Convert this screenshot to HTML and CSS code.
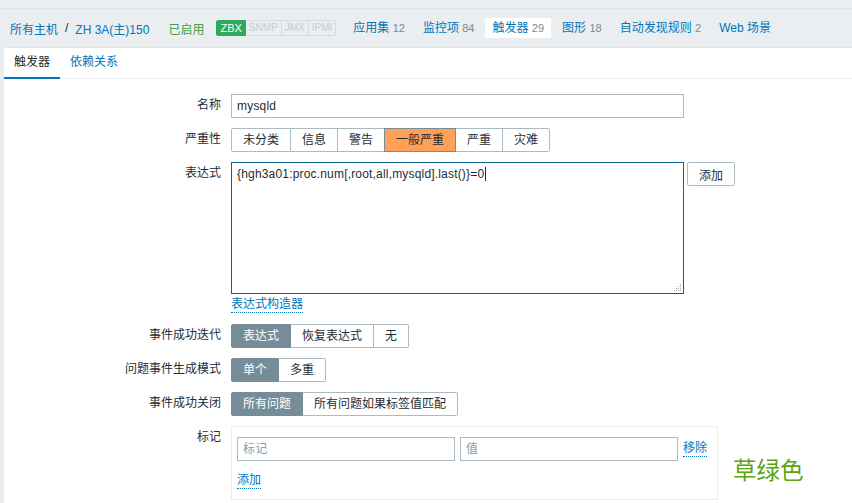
FILE: index.html
```html
<!DOCTYPE html>
<html lang="zh-CN">
<head>
    <meta charset="UTF-8">
    <title>触发器</title>
    <link rel="stylesheet" href="styles.css">
</head>
<body>
    <div class="host-nav">
        <a class="crumb" href="#">所有主机</a>
        <span class="crumb-sep">/</span>
        <a class="crumb host-name" href="#">ZH 3A(主)150</a>
        <span class="host-status">已启用</span>
        <div class="badges">
            <span class="badge badge-on">ZBX</span>
            <span class="badge">SNMP</span>
            <span class="badge">JMX</span>
            <span class="badge badge-last">IPMI</span>
        </div>
        <div class="nav-items">
            <a class="nav-item" href="#">应用集 <span class="count">12</span></a>
            <a class="nav-item" href="#">监控项 <span class="count">84</span></a>
            <a class="nav-item active" href="#">触发器 <span class="count">29</span></a>
            <a class="nav-item" href="#">图形 <span class="count">18</span></a>
            <a class="nav-item" href="#">自动发现规则 <span class="count">2</span></a>
            <a class="nav-item" href="#">Web 场景</a>
        </div>
    </div>

    <div class="panel">
        <div class="tabs">
            <a class="tab tab-active" href="#">触发器</a>
            <a class="tab" href="#">依赖关系</a>
        </div>

        <form class="form">
            <label class="form-label">名称</label>
            <div><input class="text-input name-input" type="text" value="mysqld"></div>

            <label class="form-label">严重性</label>
            <div class="segments">
                <span class="segment">未分类</span>
                <span class="segment">信息</span>
                <span class="segment">警告</span>
                <span class="segment severity-average">一般严重</span>
                <span class="segment">严重</span>
                <span class="segment">灾难</span>
            </div>

            <label class="form-label">表达式</label>
            <div>
                <div class="expression-row">
                    <div class="expression">{hgh3a01:proc.num[,root,all,mysqld].last()}=0<span class="caret"></span>
                        <svg class="grip" width="9" height="9" viewBox="0 0 9 9">
                            <g fill="#9aa7ae">
                                <rect x="7" y="1" width="1" height="1"/>
                                <rect x="5" y="3" width="1" height="1"/>
                                <rect x="7" y="3" width="1" height="1"/>
                                <rect x="3" y="5" width="1" height="1"/>
                                <rect x="5" y="5" width="1" height="1"/>
                                <rect x="7" y="5" width="1" height="1"/>
                                <rect x="1" y="7" width="1" height="1"/>
                                <rect x="3" y="7" width="1" height="1"/>
                                <rect x="5" y="7" width="1" height="1"/>
                                <rect x="7" y="7" width="1" height="1"/>
                            </g>
                        </svg>
                    </div>
                    <button class="btn-add" type="button">添加</button>
                </div>
                <a class="dotted-link builder-link" href="#">表达式构造器</a>
            </div>

            <label class="form-label">事件成功迭代</label>
            <div class="segments">
                <span class="segment selected">表达式</span>
                <span class="segment">恢复表达式</span>
                <span class="segment">无</span>
            </div>

            <label class="form-label">问题事件生成模式</label>
            <div class="segments">
                <span class="segment selected">单个</span>
                <span class="segment">多重</span>
            </div>

            <label class="form-label">事件成功关闭</label>
            <div class="segments">
                <span class="segment selected">所有问题</span>
                <span class="segment">所有问题如果标签值匹配</span>
            </div>

            <label class="form-label">标记</label>
            <div class="tags-row">
                <div class="tags-box">
                    <div class="tag-line">
                        <input class="text-input tag-input" type="text" placeholder="标记">
                        <input class="text-input tag-input" type="text" placeholder="值">
                        <a class="dotted-link" href="#">移除</a>
                    </div>
                    <a class="dotted-link" href="#">添加</a>
                </div>
                <span class="note">草绿色</span>
            </div>
        </form>
    </div>
</body>
</html>
```

FILE: styles.css
```css
* {
    box-sizing: border-box;
}
html, body {
    height: 503px;
    overflow: hidden;
}
body {
    margin: 0;
    padding-top: 8px;
    background-color: #ebeef0;
    color: #1f2c33;
    font-family: "Liberation Sans", Arial, "Noto Sans CJK SC", sans-serif;
    font-size: 12px;
}
a {
    color: #0275b8;
    text-decoration: none;
}
.host-nav {
    display: flex;
    align-items: center;
    height: 39px;
    padding-left: 10px;
    border-top: 1px solid #dfe4e7;
}
.crumb-sep {
    margin: 0 7px;
    color: #1f2c33;
}
.host-status {
    margin-left: 19px;
    color: #429e47;
}
.badges {
    display: flex;
    margin-left: 12px;
}
.badge {
    height: 16px;
    padding: 0 3px;
    border: 1px solid #d5dbde;
    border-left: 0;
    color: #c5cdd2;
    font-size: 10px;
    line-height: 14px;
}
.badge-on {
    padding: 0 3px;
    border: 1px solid #2bab5b;
    border-radius: 2px 0 0 2px;
    background-color: #2bab5b;
    color: white;
    font-size: 11px;
}
.badge-last {
    border-radius: 0 2px 2px 0;
}
.nav-items {
    display: flex;
    align-items: center;
    margin-left: 10px;
}
.nav-item {
    height: 20px;
    margin-right: 4px;
    padding: 0 7px;
    line-height: 20px;
    white-space: nowrap;
}
.nav-item.active {
    border-radius: 2px;
    background-color: white;
}
.count {
    color: #768d99;
    font-size: 11px;
}
.panel {
    height: 460px;
    margin-left: 4px;
    background-color: white;
    border-top: 1px solid #dfe4e7;
}
.tabs {
    display: flex;
    height: 31px;
    border-bottom: 1px solid #ebeef0;
}
.tab {
    height: 31px;
    padding: 0 10px;
    line-height: 29px;
}
.tab-active {
    border-bottom: 2px solid #0275b8;
    color: #1f2c33;
}
.form {
    display: grid;
    grid-template-columns: 217px 1fr;
    column-gap: 10px;
    row-gap: 10px;
    padding-top: 15px;
}
.form-label {
    line-height: 23px;
    text-align: right;
    white-space: nowrap;
}
.text-input {
    height: 24px;
    padding: 0 5px;
    border: 1px solid #acbbc2;
    color: #1f2c33;
    font: inherit;
    letter-spacing: 0.2px;
    outline: none;
}
.text-input::placeholder {
    color: #8a9aa3;
}
.name-input {
    display: block;
    width: 453px;
}
.segments {
    display: flex;
    height: 24px;
}
.segment {
    padding: 0 11px;
    border: 1px solid #acbbc2;
    border-left: 0;
    line-height: 22px;
    white-space: nowrap;
}
.segment:first-child {
    border-left: 1px solid #acbbc2;
    border-radius: 2px 0 0 2px;
}
.segment:last-child {
    border-radius: 0 2px 2px 0;
}
.segment.selected {
    border-color: #768d99;
    background-color: #768d99;
    color: white;
}
.severity-average {
    border: 1px solid #768d99;
    margin-left: -1px;
    background-color: #ffa059;
}
.expression-row {
    display: flex;
    align-items: flex-start;
}
.expression {
    position: relative;
    width: 453px;
    height: 132px;
    padding: 4px 5px;
    border: 1px solid #0a6296;
    color: #1f2c33;
    letter-spacing: 0.18px;
}
.caret {
    display: inline-block;
    width: 1px;
    height: 14px;
    margin-left: 1px;
    vertical-align: -3px;
    background-color: #1f2c33;
}
.grip {
    position: absolute;
    right: 1px;
    bottom: 1px;
}
.btn-add {
    width: 48px;
    height: 24px;
    margin-left: 3px;
    padding: 0;
    border: 1px solid #acbbc2;
    border-radius: 2px;
    background-color: white;
    color: #1f2c33;
    font: inherit;
}
.dotted-link {
    display: inline-block;
    border-bottom: 1px dotted #0275b8;
    line-height: 15px;
}
.builder-link {
    display: block;
    width: 72px;
    margin-top: 3px;
    margin-bottom: 1px;
}
.tags-row {
    display: flex;
    align-items: flex-start;
}
.tags-box {
    width: 487px;
    height: 74px;
    padding: 10px 5px 0;
    border: 1px solid #ebeef0;
}
.tag-line {
    display: flex;
    align-items: center;
    margin-bottom: 12px;
}
.tag-input {
    width: 218px;
    margin-right: 5px;
}
.note {
    margin-left: 15px;
    margin-top: 30px;
    color: #5aa512;
    font-size: 23.5px;
    line-height: 30px;
}
```
